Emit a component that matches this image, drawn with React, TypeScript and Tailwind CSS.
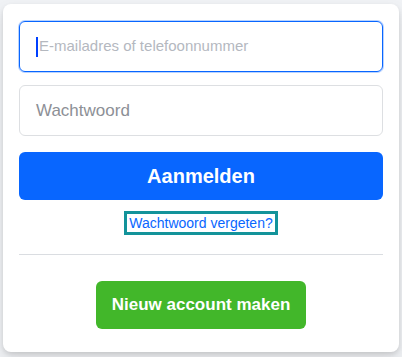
export default function App() {
  return (
    <div className="min-h-[357px] w-[402px] bg-[#f0f2f5] pt-[4px] pl-[3px] font-['Liberation_Sans',Arial,sans-serif]">
      <div className="w-[396px] rounded-lg bg-white px-4 pt-[17px] pb-[23px] shadow-[0_2px_4px_rgba(0,0,0,0.1),0_8px_16px_rgba(0,0,0,0.1)]">
        <div className="flex h-[51px] items-center rounded-md border border-[#0866ff] px-4 shadow-[0_0_0_1px_#b9d3ff]">
          <span className="mr-[1px] h-[20px] w-[2px] bg-[#0040ff]" />
          <span className="text-[15px] text-[#b4b8bf]">E-mailadres of telefoonnummer</span>
        </div>
        <div className="mt-[13px] flex h-[51px] items-center rounded-md border border-[#dddfe2] px-4">
          <span className="text-[17px] text-[#8d9096]">Wachtwoord</span>
        </div>
        <button className="mt-[16px] flex h-[48px] w-full items-center justify-center rounded-md bg-[#0866ff] text-[20px] font-bold text-white">
          Aanmelden
        </button>
        <div className="mt-[14px] flex justify-center">
          <a className="px-[2px] text-[14px] leading-[18px] text-[#0866ff] outline-[3px] outline-solid outline-[#13939a]">
            Wachtwoord vergeten?
          </a>
        </div>
        <div className="mt-[22px] border-b border-[#dadde1]" />
        <div className="mt-[26px] flex justify-center">
          <button className="flex h-[48px] w-[210px] items-center justify-center rounded-md bg-[#42b72a] text-[17px] font-bold text-white">
            Nieuw account maken
          </button>
        </div>
      </div>
    </div>
  );
}
